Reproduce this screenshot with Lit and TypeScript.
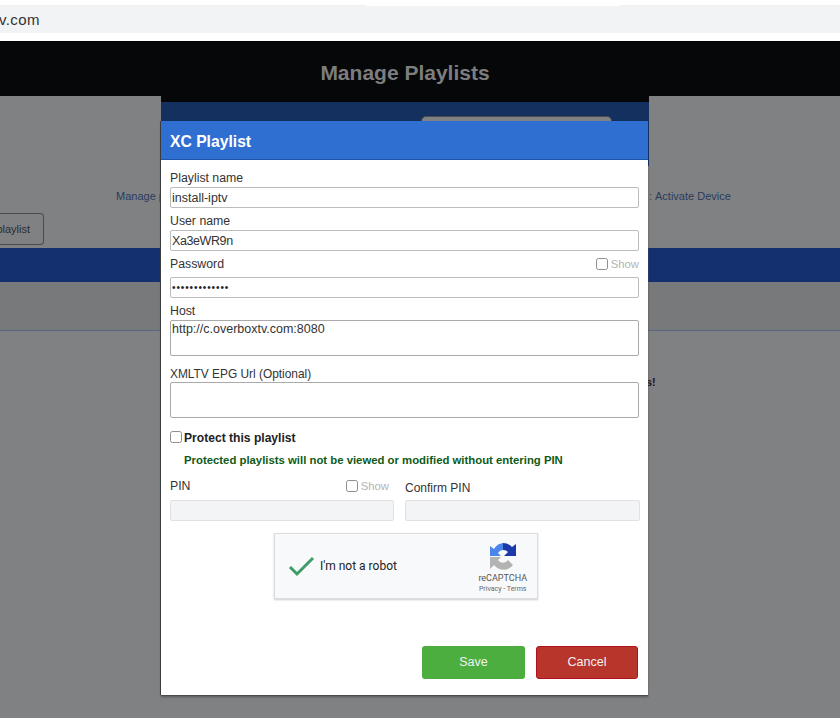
import { LitElement, html, css } from "lit";
import { customElement } from "lit/decorators.js";

@customElement("app-root")
export class AppRoot extends LitElement {
  static styles = css`
    :host {
      display: block;
      position: relative;
      width: 840px;
      height: 718px;
      overflow: hidden;
      background: #808183;
      font-family: "Liberation Sans", Arial, sans-serif;
      color: #2b2b2b;
    }
    * { box-sizing: border-box; }
    .chrome { height: 41px; background: #fff; padding-top: 5px; }
    .tabs {
      height: 1px;
      background: linear-gradient(to right, #f1f1f1 366px, #fff 366px, #fff 620px, #f1f1f1 620px);
    }
    .url {
      height: 27px;
      background: #f1f3f4;
      color: #333;
      font-size: 15px;
      line-height: 27px;
      letter-spacing: 0.4px;
      text-indent: -1px;
    }
    .head {
      height: 55px;
      background: #060709;
      border-top: 1px solid #000;
      display: flex;
      justify-content: center;
      padding: 17px 30px 0 0;
      color: #7d7d7d;
      font-size: 21px;
      font-weight: 700;
      line-height: 27px;
    }
    .nav {
      height: 117px;
      padding: 93px 0 0 116px;
      display: flex;
      font-size: 11px;
      line-height: 15px;
      color: #2a3c5e;
    }
    .nav .a { width: 533px; white-space: nowrap; overflow: hidden; }
    .nav .sep { color: #5a3a22; width: 6px; }
    .pl { height: 35px; display: flex; }
    .plbtn {
      width: 44px;
      height: 32px;
      border: 1px solid #4a4b4d;
      border-left: 0;
      border-radius: 0 4px 4px 0;
      font-size: 11px;
      line-height: 30px;
      color: #2b2c2e;
      text-align: right;
      padding-right: 13px;
      white-space: nowrap;
      display: flex;
      justify-content: flex-end;
    }
    .band { height: 34px; background: #14306e; }
    .sub { height: 48px; background: #77797a; }
    .rule { height: 1px; background: #5c6484; }
    .lower {
      padding: 44px 0 0 646px;
      font-size: 11px;
      font-weight: 700;
      color: #2a0f0f;
      line-height: 14px;
    }

    .under {
      position: absolute;
      left: 161px;
      top: 96px;
      width: 488px;
      height: 26px;
      background: #13305f;
      border-top: 6px solid #060709;
    }
    .under i {
      position: absolute;
      left: 260px;
      top: 14px;
      width: 191px;
      height: 8px;
      background: #808183;
      border: 1px solid #4a4b4d;
      border-radius: 5px 5px 0 0;
    }
    .modal {
      position: absolute;
      left: 161px;
      top: 121px;
      width: 487px;
      height: 574px;
      background: #fff;
      box-shadow: -1px 0 0 #3a3b3d, 0 1px 0 #4a4b4d, 0 2px 2px #555;
      display: flex;
      flex-direction: column;
    }
    .modal::after {
      content: "";
      position: absolute;
      left: 487px;
      top: 0;
      width: 1px;
      height: 45px;
      background: #13305f;
    }
    .mhead {
      height: 39px;
      flex: none;
      background: #2f6fd1;
      border-bottom: 1px solid #1f55a8;
      color: #fff;
      font-size: 15.7px;
      font-weight: 700;
      line-height: 41px;
      padding-left: 9px;
    }
    .body {
      flex: 1;
      padding: 10px 9px 16px 9px;
      display: flex;
      flex-direction: column;
      font-size: 12.3px;
      color: #333;
    }
    .lab { height: 17px; line-height: 16px; display: flex; justify-content: space-between; white-space: nowrap; }
    .lab.pw { height: 26px; align-items: center; }
    .lab.xml { margin-top: 10px; height: 16px; font-size: 11.9px; }
    .field {
      display: block;
      width: 100%;
      height: 21px;
      border: 1.5px solid #bcbcbc;
      border-radius: 2px;
      padding: 0 0 0 1px;
      font: 12.5px "Liberation Sans", Arial, sans-serif;
      color: #333;
      background: #fff;
      outline: none;
      resize: none;
    }
    .field.tight { letter-spacing: -0.4px; }
    .field.dots { font-size: 10px; letter-spacing: 0.9px; color: #222; }
    textarea.field { height: 36px; padding-top: 1px; border-color: #aaa; }
    .gap-a { margin-top: 5px; }
    .show {
      display: flex;
      align-items: center;
      gap: 3px;
      color: #b4b4b4;
      font-size: 11.3px;
    }
    .box {
      appearance: none;
      -webkit-appearance: none;
      margin: 0;
      width: 12px;
      height: 12px;
      border: 1px solid #8e8e8e;
      border-radius: 2.5px;
      background: #fff;
      flex: none;
    }
    .protect {
      margin-top: 12px;
      display: flex;
      align-items: center;
      gap: 2px;
      font-weight: 700;
      font-size: 12.1px;
      color: #222;
      height: 15px;
    }
    .protect .box { margin-top: -2px; }
    .note {
      margin: 8px 0 0 14px;
      font-size: 11.35px;
      font-weight: 700;
      color: #0f5a16;
      line-height: 15px;
      white-space: nowrap;
    }
    .pins {
      margin-top: 8px;
      display: grid;
      grid-template-columns: 224px 235px;
      column-gap: 11px;
    }
    .pins .lab { height: 24px; align-items: center; padding-bottom: 4px; }
    .pins .show { padding-right: 5px; }
    .pins .conf { padding-top: 3px; font-size: 12px; }
    .pins .field { background: #f3f4f6; border: 1px solid #dfe1e4; }
    .cap {
      margin: 12px 0 0 104px;
      width: 264px;
      height: 66px;
      background: #f8f9fb;
      border: 1px solid #dcdde0;
      box-shadow: 0 1px 2px #ccc;
      display: flex;
      align-items: center;
      padding: 0 10px 0 13px;
    }
    .cap .txt { margin-left: 4px; font: 12px Roboto, "Liberation Sans", sans-serif; color: #222; flex: 1; }
    .brand { display: flex; flex-direction: column; align-items: center; margin-top: 4px; color: #666; font-family: Roboto, "Liberation Sans", sans-serif; }
    .brand .r { font-size: 9px; line-height: 11px; margin-top: 3px; color: #555; }
    .brand .p { font-size: 7px; line-height: 10px; }
    .actions {
      margin-top: auto;
      padding-right: 1px;
      display: flex;
      justify-content: flex-end;
      gap: 11px;
    }
    .btn {
      height: 33px;
      border-radius: 3px;
      color: #f2f2f2;
      font-size: 12.5px;
      line-height: 33px;
      text-align: center;
    }
    .save { width: 103px; background: #4cae3e; }
    .cancel { width: 102px; background: #b8352c; border: 1px solid #b0101a; line-height: 31px; }
  `;

  render() {
    return html`
      <div class="chrome"><div class="tabs"></div><div class="url">v.com</div></div>
      <div class="head">Manage Playlists</div>
      <div class="nav"><span class="a">Manage playlists</span><span class="sep">:</span><span>Activate Device</span></div>
      <div class="pl"><div class="plbtn">playlist</div></div>
      <div class="band"></div>
      <div class="sub"></div>
      <div class="rule"></div>
      <div class="lower">s!</div>

      <div class="under"><i></i></div>
      <div class="modal">
        <div class="mhead">XC Playlist</div>
        <div class="body">
          <div class="lab">Playlist name</div>
          <input class="field" .value=${"install-iptv"} />
          <div class="lab gap-a">User name</div>
          <input class="field tight" .value=${"Xa3eWR9n"} />
          <div class="lab pw">
            <span>Password</span>
            <label class="show"><input type="checkbox" class="box" />Show</label>
          </div>
          <input class="field dots" type="password" .value=${"Xa3eWR9nAbCde"} />
          <div class="lab gap-a">Host</div>
          <textarea class="field" .value=${"http://c.overboxtv.com:8080"}></textarea>
          <div class="lab xml">XMLTV EPG Url (Optional)</div>
          <textarea class="field"></textarea>
          <label class="protect"><input type="checkbox" class="box" />Protect this playlist</label>
          <div class="note">Protected playlists will not be viewed or modified without entering PIN</div>
          <div class="pins">
            <div class="lab">
              <span>PIN</span>
              <label class="show"><input type="checkbox" class="box" />Show</label>
            </div>
            <div class="lab conf">Confirm PIN</div>
            <input class="field" disabled />
            <input class="field" disabled />
          </div>
          <div class="cap">
            <svg width="28" height="22" viewBox="0 0 28 22">
              <path d="M2 12 L9 19 L25 3" fill="none" stroke="#3f9b68" stroke-width="3" />
            </svg>
            <span class="txt">I'm not a robot</span>
            <div class="brand">
              <svg width="28" height="28" viewBox="0 0 28 28">
                <path d="M1 15 H12 L9 18 A6 6 0 0 0 19 18 L24 23 A12 12 0 0 1 5 23 L1 27 Z" fill="#b3b3b3" />
                <path d="M1 14 V4 L5 7 A12 12 0 0 1 14 1 V8 A6 6 0 0 0 9 11 L12 14 Z" fill="#4a86ec" />
                <path d="M14 1 A12 12 0 0 1 23 5 L27 2 V14 H15 L19 10 A6 6 0 0 0 14 8 Z" fill="#1c3aa9" />
              </svg>
              <span class="r">reCAPTCHA</span>
              <span class="p">Privacy - Terms</span>
            </div>
          </div>
          <div class="actions">
            <div class="btn save">Save</div>
            <div class="btn cancel">Cancel</div>
          </div>
        </div>
      </div>
    `;
  }
}
